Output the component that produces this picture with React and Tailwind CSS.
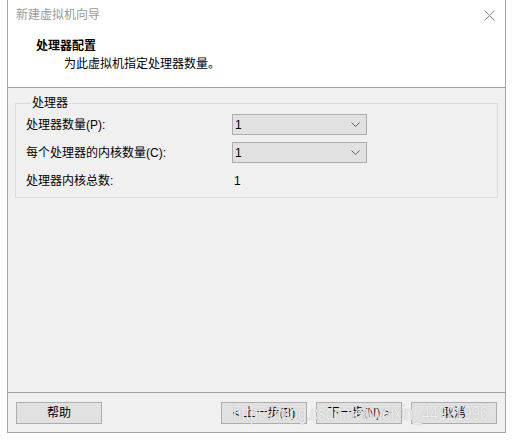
const font = { fontFamily: '"Liberation Sans", "Noto Sans CJK SC", sans-serif' };

const Combo = ({ value }) => (
  <div className="w-[135px] h-[21px] bg-[#e1e1e1] border border-[#adadad] flex items-center justify-between pl-[2px] pr-[6px]">
    <span className="text-[12px] text-black">{value}</span>
    <svg width="9" height="6" viewBox="0 0 9 6">
      <path d="M0.5 0.5 L4.5 4.5 L8.5 0.5" fill="none" stroke="#606060" strokeWidth="1" />
    </svg>
  </div>
);

const Btn = ({ children }) => (
  <button className="w-[86px] h-[22px] bg-[#e1e1e1] border border-[#adadad] text-[12px] text-black flex items-center justify-center">
    {children}
  </button>
);

const App = () => {
  return (
    <div className="w-[513px] h-[440px] bg-white relative overflow-hidden" style={font}>
      <div className="ml-[7px] w-[499px] h-[433px] border-x border-b border-[#a6a6a6] flex flex-col">
        {/* title bar */}
        <div className="h-[30px] flex items-center justify-between pl-[8px] pr-[10px] bg-white">
          <span className="text-[12px] text-[#9a9a9a]">新建虚拟机向导</span>
          <svg width="11" height="11" viewBox="0 0 11 11">
            <path d="M0.5 0.5 L10.5 10.5 M10.5 0.5 L0.5 10.5" stroke="#8a8a8a" strokeWidth="1" />
          </svg>
        </div>

        {/* header */}
        <div className="h-[58px] bg-white border-b border-[#a0a0a0] pl-[28px] pt-[8px]">
          <div className="text-[12px] font-bold text-black leading-[17px]">处理器配置</div>
          <div className="text-[12px] text-black leading-[17px] pl-[28px] mt-[1px]">为此虚拟机指定处理器数量。</div>
        </div>

        {/* content */}
        <div className="flex-1 bg-[#f0f0f0] px-[7px] pt-[8px]">
          <fieldset className="border border-[#dcdcdc] pl-[10px] pr-[10px] pb-[6px]">
            <legend className="ml-[5px] px-[1px] text-[12px] leading-[14px] text-black">处理器</legend>
            <div className="flex flex-col pt-[4px]">
              <div className="flex items-center h-[21px]">
                <span className="w-[206px] text-[12px] text-black">处理器数量(P):</span>
                <Combo value="1" />
              </div>
              <div className="flex items-center h-[21px] mt-[7px]">
                <span className="w-[206px] text-[12px] text-black">每个处理器的内核数量(C):</span>
                <Combo value="1" />
              </div>
              <div className="flex items-center h-[21px] mt-[7px]">
                <span className="w-[208px] text-[12px] text-black">处理器内核总数:</span>
                <span className="text-[12px] text-black">1</span>
              </div>
            </div>
          </fieldset>
        </div>

        {/* footer */}
        <div className="h-[40px] bg-[#f0f0f0] border-t border-[#a0a0a0] flex items-start pt-[9px] pl-[8px] pr-[8px]">
          <Btn>帮助</Btn>
          <div className="flex-1" />
          <div className="flex gap-[9px]">
            <Btn>&lt; 上一步(B)</Btn>
            <Btn>下一步(N) &gt;</Btn>
            <Btn>取消</Btn>
          </div>
        </div>
      </div>

      {/* watermark */}
      <div
        className="absolute left-[233px] top-[402px] text-[15px] leading-[22px] text-white/80 whitespace-nowrap origin-left scale-y-[1.3]"
        style={{ fontFamily: '"Liberation Sans", sans-serif', textShadow: "0 0 1px rgba(140,140,140,0.8)" }}
      >
        https://blog.csdn.net/weixin_44921996
      </div>
    </div>
  );
};

export default App;
